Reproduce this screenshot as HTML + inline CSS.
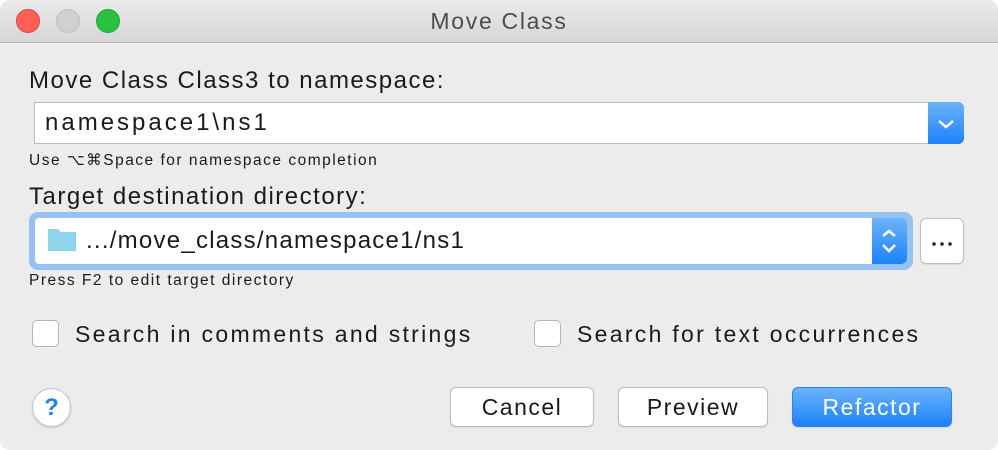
<!DOCTYPE html>
<html><head><style>
*{margin:0;padding:0;box-sizing:border-box}
body{width:998px;height:450px;background:#fff;font-family:"Liberation Sans",sans-serif;color:#1a1a1a;position:relative;overflow:hidden}
.win{position:absolute;left:0;top:0;width:998px;height:450px;background:#ececec;border-radius:10px;overflow:hidden}
.tb{position:absolute;left:0;top:0;width:998px;height:43px;background:linear-gradient(#ebebeb,#d6d6d6);border-bottom:1px solid #b8b8b8}
.dot{position:absolute;top:9px;width:24px;height:24px;border-radius:50%}
.title{position:absolute;top:8px;left:0;width:998px;text-align:center;font-size:23px;color:#4d4d4d;letter-spacing:1.7px}
.abs{position:absolute}
.lbl{font-size:23px;white-space:nowrap;letter-spacing:2.3px}
.hint{font-size:15.5px;white-space:nowrap;letter-spacing:1.5px}
.inp{background:#fff;border:1px solid #bdbdbd}
.btn{position:absolute;background:#fff;border:1px solid #bcbcbc;border-radius:6px;font-size:23px;text-align:center;line-height:38px;box-shadow:0 1px 1px rgba(0,0,0,.08);letter-spacing:1.5px}
.blue{background:linear-gradient(#6cb3fa,#1a82fb);}
.cb{position:absolute;width:27px;height:27px;border:1px solid #b5b5b5;border-radius:5px;background:#fff}
</style></head><body><div class="win">
<div class="tb">
<div class="dot" style="left:16px;background:#fe5f57;border:1px solid #e0443e"></div>
<div class="dot" style="left:56px;background:#d0d0d0;border:1px solid #bdbdbd"></div>
<div class="dot" style="left:96px;background:#29c23f;border:1px solid #1aab29"></div>
<div class="title">Move Class</div>
</div>
<div class="abs lbl" style="left:29px;top:67px;font-size:24px;letter-spacing:1.5px">Move Class Class3 to namespace:</div>
<div class="abs inp" style="left:34px;top:102px;width:930px;height:42px;border-radius:0 6px 6px 0"></div>
<div class="abs lbl" style="left:45px;top:109px;font-size:24px;letter-spacing:3px">namespace1\ns1</div>
<div class="abs blue" style="left:928px;top:102px;width:36px;height:42px;border-radius:0 6px 6px 0"><svg width="36" height="42"><path d="M11 19l7 6 7-6" stroke="#fff" stroke-width="2.5" fill="none"/></svg></div>
<div class="abs hint" style="left:29px;top:151px">Use ⌥⌘Space for namespace completion</div>
<div class="abs lbl" style="left:29px;top:183px;font-size:24px;letter-spacing:1.5px">Target destination directory:</div>
<div class="abs" style="left:29px;top:212px;width:884px;height:58px;background:#96c2f3;border-radius:9px"></div>
<div class="abs inp" style="left:35px;top:218px;width:872px;height:46px;border:none;border-radius:4px 6px 6px 4px"></div>
<svg class="abs" style="left:47px;top:228px" width="30" height="24"><path d="M1 1h10l3 3h15v19H1z" fill="#8ed4ec"/></svg>
<div class="abs lbl" style="left:86px;top:227px;font-size:24px;letter-spacing:1.25px">.../move_class/namespace1/ns1</div>
<div class="abs blue" style="left:872px;top:218px;width:35px;height:46px;border-radius:0 6px 6px 0"><svg width="35" height="46"><path d="M11 18l6-5 6 5M11 27l6 6 6-6" stroke="#fff" stroke-width="2.5" fill="none"/></svg></div>
<div class="btn" style="left:920px;top:218px;width:44px;height:46px"><svg width="42" height="44"><circle cx="13" cy="25" r="1.8" fill="#222"/><circle cx="21" cy="25" r="1.8" fill="#222"/><circle cx="29" cy="25" r="1.8" fill="#222"/></svg></div>
<div class="abs hint" style="left:29px;top:272px">Press F2 to edit target directory</div>
<div class="cb" style="left:32px;top:320px"></div>
<div class="abs lbl" style="left:75px;top:321px">Search in comments and strings</div>
<div class="cb" style="left:534px;top:320px"></div>
<div class="abs lbl" style="left:577px;top:321px">Search for text occurrences</div>
<div class="abs" style="left:32px;top:388px;width:39px;height:39px;border-radius:50%;background:#fff;border:1px solid #c2c2c2;box-shadow:0 1px 2px rgba(0,0,0,.15);color:#1a82fb;font-size:24px;font-weight:bold;text-align:center;line-height:37px">?</div>
<div class="btn" style="left:450px;top:387px;width:144px;height:40px">Cancel</div>
<div class="btn" style="left:618px;top:387px;width:150px;height:40px">Preview</div>
<div class="btn blue" style="left:792px;top:387px;width:160px;height:40px;border-color:#2b86f5;color:#fff">Refactor</div>
</div></body></html>
